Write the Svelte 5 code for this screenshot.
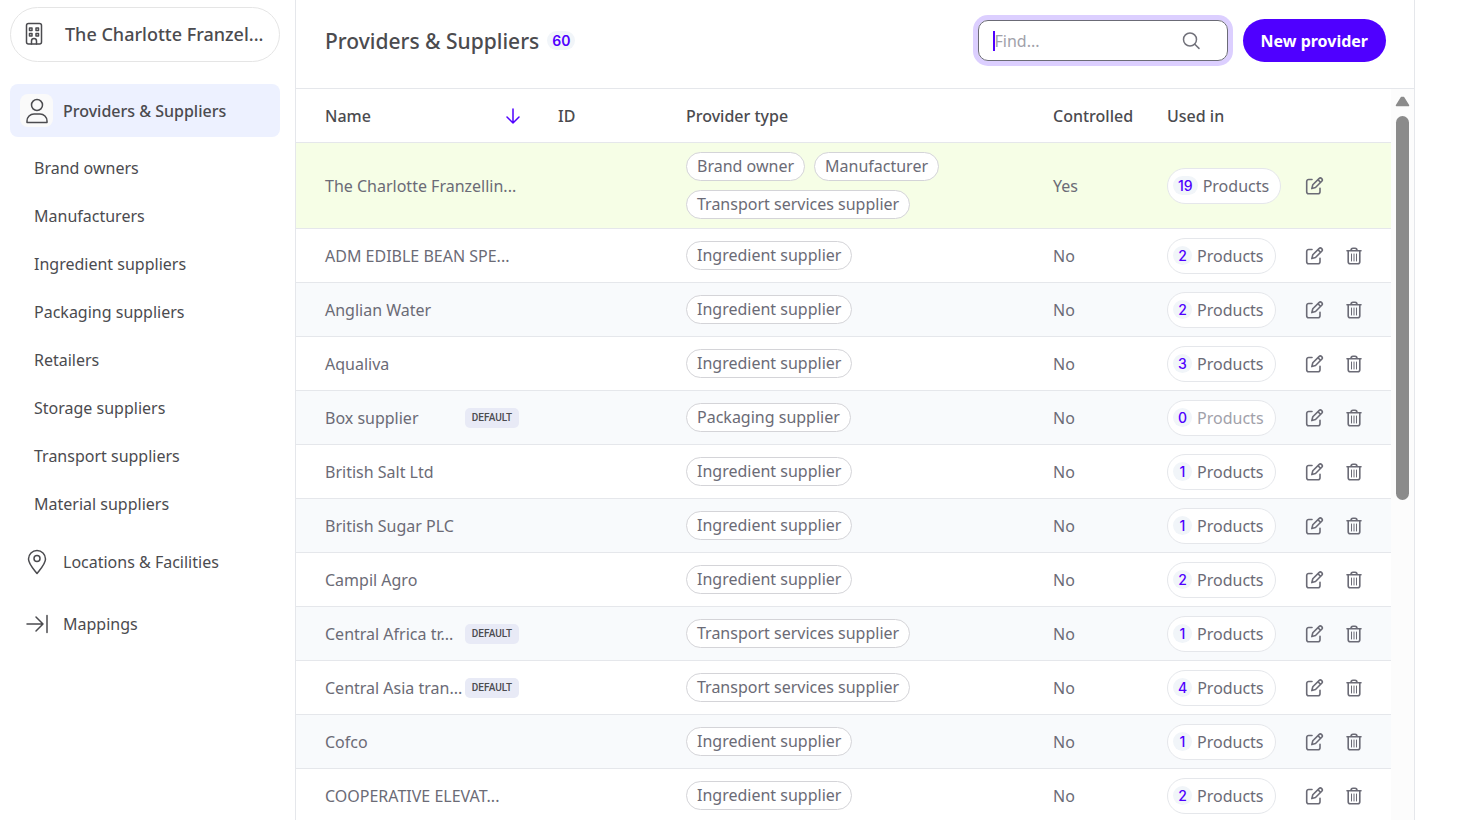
<script lang="ts">
	interface Provider {
		name: string;
		types: string[];
		products: number;
		own?: boolean;
		isDefault?: boolean;
	}

	const subItems = [
		'Brand owners',
		'Manufacturers',
		'Ingredient suppliers',
		'Packaging suppliers',
		'Retailers',
		'Storage suppliers',
		'Transport suppliers',
		'Material suppliers'
	];

	const ingredient = ['Ingredient supplier'];
	const transport = ['Transport services supplier'];

	const providers: Provider[] = [
		{
			name: 'The Charlotte Franzellin...',
			types: ['Brand owner', 'Manufacturer', 'Transport services supplier'],
			products: 19,
			own: true
		},
		{ name: 'ADM EDIBLE BEAN SPE...', types: ingredient, products: 2 },
		{ name: 'Anglian Water', types: ingredient, products: 2 },
		{ name: 'Aqualiva', types: ingredient, products: 3 },
		{ name: 'Box supplier', types: ['Packaging supplier'], products: 0, isDefault: true },
		{ name: 'British Salt Ltd', types: ingredient, products: 1 },
		{ name: 'British Sugar PLC', types: ingredient, products: 1 },
		{ name: 'Campil Agro', types: ingredient, products: 2 },
		{ name: 'Central Africa tr...', types: transport, products: 1, isDefault: true },
		{ name: 'Central Asia tran...', types: transport, products: 4, isDefault: true },
		{ name: 'Cofco', types: ingredient, products: 1 },
		{ name: 'COOPERATIVE ELEVAT...', types: ingredient, products: 2 }
	];

	let search = $state('');
</script>

<div class="app">
	<aside>
		<button class="org">
			<svg width="18" height="24" viewBox="0 0 18 24" aria-hidden="true">
				<rect x="1.5" y="1.5" width="15" height="20.5" rx="2" />
				<path d="M4.5 6h2.5v2.5h-2.5zM11 6h2.5v2.5h-2.5zM4.5 11.5h2.5v2.5h-2.5zM11 11.5h2.5v2.5h-2.5zM6.5 22v-3a2.5 2.5 0 0 1 5 0v3" />
			</svg>
			<span>The Charlotte Franzel...</span>
		</button>

		<nav>
			<a class="item active" href="#providers">
				<span class="icon">
					<svg width="26" height="28" viewBox="0 0 26 28" aria-hidden="true">
						<circle cx="13" cy="8" r="5.5" />
						<path d="M3 25.5v-1.5a7 7 0 0 1 7-7h6a7 7 0 0 1 7 7v1.5z" />
					</svg>
				</span>
				Providers &amp; Suppliers
			</a>
			<div class="sub">
				{#each subItems as label}
					<a href="#sub">{label}</a>
				{/each}
			</div>
			<a class="item" href="#locations">
				<span class="icon">
					<svg width="26" height="28" viewBox="0 0 26 28" aria-hidden="true">
						<path d="M13 25.5C10 21.5 4.5 16 4.5 11a8.5 8.5 0 0 1 17 0c0 5-5.5 10.5-8.5 14.5z" />
						<circle cx="13" cy="10.5" r="3" />
					</svg>
				</span>
				Locations &amp; Facilities
			</a>
			<a class="item" href="#mappings">
				<span class="icon">
					<svg width="26" height="28" viewBox="0 0 26 28" aria-hidden="true">
						<path d="M3 14h16M12 7l7 7-7 7M23 5.5v17" />
					</svg>
				</span>
				Mappings
			</a>
		</nav>
	</aside>

	<main>
		<header>
			<h1>Providers &amp; Suppliers</h1>
			<span class="count">60</span>
			<label class="search">
				<span class="caret"></span>
				<input type="text" placeholder="Find..." aria-label="Find" bind:value={search} />
				<svg width="20" height="20" viewBox="0 0 20 20" aria-hidden="true">
					<circle cx="9" cy="8.5" r="6.5" />
					<path d="M13.8 13.2l4.2 4.2" />
				</svg>
			</label>
			<button class="new">New provider</button>
		</header>

		<div class="content">
			<table>
				<thead>
					<tr>
						<th class="name">
							<div class="name-cell">
								Name
								<svg width="12" height="14" viewBox="0 0 12 14" aria-hidden="true">
									<path d="M6 0v14M0 8l6 6 6-6" />
								</svg>
							</div>
						</th>
						<th class="id">ID</th>
						<th>Provider type</th>
						<th class="controlled">Controlled</th>
						<th class="used">Used in</th>
						<th class="actions"></th>
					</tr>
				</thead>
				<tbody>
					{#each providers as p}
						<tr class:own={p.own}>
							<td class="name">
								<div class="name-cell">
									<span>{p.name}</span>
									{#if p.isDefault}
										<span class="default">DEFAULT</span>
									{/if}
								</div>
							</td>
							<td></td>
							<td>
								<div class="chips">
									{#each p.types as type}
										<span class="chip">{type}</span>
									{/each}
								</div>
							</td>
							<td>{p.own ? 'Yes' : 'No'}</td>
							<td>
								<button class="products" disabled={p.products === 0}>
									<span class="num">{p.products}</span>
									Products
								</button>
							</td>
							<td>
								<div class="tools">
									<button aria-label="Edit {p.name}">
										<svg width="20" height="20" viewBox="0 0 20 20">
											<path d="M8 3.5H4.7a2 2 0 0 0-2 2v10.3a2 2 0 0 0 2 2h9.3a2 2 0 0 0 2-2v-3.5" />
											<path d="M7.8 12.6l1-3.8 6.2-6.2a1.9 1.9 0 0 1 2.7 2.7l-6.2 6.2zM14 3.8l2.6 2.6" />
										</svg>
									</button>
									{#if !p.own}
										<button aria-label="Delete {p.name}">
											<svg width="20" height="20" viewBox="0 0 20 20">
												<path d="M3 4.8h14M4.2 4.8v11a2 2 0 0 0 2 2h7.600a2 2 0 0 0 2-2v-11M7 4.600c0-1.500.8-2.300 2-2.300h2c1.200 0 2 .8 2 2.300" />
												<path class="thin" d="M7.500 8v7M10 8v7M12.500 8v7" />
											</svg>
										</button>
									{/if}
								</div>
							</td>
						</tr>
					{/each}
				</tbody>
			</table>
			<div class="scrollbar">
				<svg width="15" height="11" viewBox="0 0 15 11" aria-hidden="true">
					<path d="M6.5 1.500h2l5 8h-12z" />
				</svg>
				<div class="thumb"></div>
			</div>
		</div>
	</main>
</div>

<style>
	:global(body) {
		background: #fff;
		overflow: hidden;
	}

	.app {
		display: flex;
		height: 100vh;
		padding-right: 44px;
		font: 16px/24px 'Noto Sans', sans-serif;
		color: #4b4b4f;
	}

	button,
	input {
		font: inherit;
		color: inherit;
		border: 0;
		background: none;
		padding: 0;
	}

	svg {
		fill: none;
		stroke: currentColor;
		stroke-width: 1.5;
		stroke-linecap: round;
		stroke-linejoin: round;
		flex-shrink: 0;
	}

	aside {
		width: 270px;
		flex-shrink: 0;
		padding: 7px 15px 0 10px;
		border-right: 1px solid #e5e7eb;
	}

	.org {
		display: flex;
		align-items: center;
		gap: 22px;
		width: 100%;
		height: 55px;
		padding: 0 0 2px 14px;
		border: 1px solid #e5e5e5;
		border-radius: 28px;
		font-size: 18px;
		font-weight: 500;
		white-space: nowrap;
	}

	nav {
		display: flex;
		flex-direction: column;
		margin-top: 22px;
	}

	a {
		color: inherit;
		text-decoration: none;
	}

	.item {
		display: flex;
		align-items: center;
		gap: 10px;
		height: 53px;
		padding-left: 10px;
		margin-bottom: 9px;
		border-radius: 8px;
	}

	.active {
		margin-bottom: 0;
		background: #edf1ff;
		font-weight: 500;
	}

	.icon {
		display: flex;
		align-items: center;
		justify-content: center;
		width: 33px;
		height: 33px;
		border-radius: 8px;
	}

	.active .icon {
		background: #fafafa;
	}

	.sub {
		display: flex;
		flex-direction: column;
		padding: 7px 0 7px 24px;
	}

	.sub a {
		line-height: 48px;
	}

	main {
		flex: 1;
		min-width: 0;
		display: flex;
		flex-direction: column;
		border-right: 1px solid #e5e7eb;
	}

	header {
		display: flex;
		align-items: center;
		height: 81px;
		padding: 0 28px 7px 29px;
		border-bottom: 1px solid #e5e7eb;
	}

	h1 {
		margin: 0;
		font-size: 21px;
		font-weight: 500;
	}

	.count {
		margin-left: 8px;
		padding: 0 5px;
		border-radius: 10px;
		background: #f1f5f9;
		color: #4f00ff;
		font-family: Inter, sans-serif;
		font-size: 14px;
		line-height: 19px;
		font-weight: 600;
	}

	.search {
		box-sizing: border-box;
		display: flex;
		align-items: center;
		width: 250px;
		height: 41px;
		margin-left: auto;
		padding: 0 26px 0 14px;
		border: 1px solid #6b6b76;
		border-radius: 10px;
		box-shadow: 0 0 0 5px #dccfff;
		color: #71717a;
	}

	.caret {
		width: 2px;
		height: 20px;
		background: #4f00ff;
	}

	.search input {
		flex: 1;
		min-width: 0;
		outline: none;
	}

	.search input::placeholder {
		color: #a1a1aa;
	}

	.new {
		height: 43px;
		margin-left: 15px;
		padding: 0 18px;
		border-radius: 22px;
		background: #4f00ff;
		color: #fff;
		font-weight: 700;
	}

	.content {
		flex: 1;
		min-height: 0;
		display: flex;
		align-items: flex-start;
		overflow: hidden;
	}

	table {
		flex: 1;
		min-width: 0;
		table-layout: fixed;
		border-collapse: separate;
		border-spacing: 0;
	}

	th,
	td {
		height: 53px;
		padding: 0 10px;
		border-bottom: 1px solid #e5e7eb;
		text-align: left;
		font-weight: 400;
		white-space: nowrap;
	}

	th {
		font-weight: 500;
	}

	td {
		color: #6b6b76;
	}

	.name {
		width: 194px;
		padding: 0 29px;
	}

	.id {
		width: 108px;
	}

	.controlled {
		width: 94px;
	}

	.used {
		width: 117px;
	}

	.actions {
		width: 77px;
	}

	.name-cell {
		display: flex;
		align-items: center;
		justify-content: space-between;
	}

	.name-cell svg {
		color: #4f00ff;
		overflow: visible;
	}

	tbody tr:nth-child(odd) {
		background: #f8fafc;
	}

	tbody tr.own {
		background: #f6fee6;
	}

	.own td {
		height: 85px;
	}

	.default {
		padding: 0 7px;
		border-radius: 5px;
		background: #e8eaf6;
		color: #4b4b4f;
		font-family: Roboto, sans-serif;
		font-size: 10px;
		line-height: 20px;
		font-weight: 500;
	}

	.chips {
		display: flex;
		flex-wrap: wrap;
		gap: 9px;
	}

	.chip {
		padding: 0 10px;
		border: 1px solid #d4d4d8;
		border-radius: 15px;
		background: #fff;
		line-height: 27px;
	}

	.products {
		display: flex;
		align-items: center;
		gap: 5px;
		height: 36px;
		padding: 0 11px 0 5px;
		border: 1px solid #e5e7eb;
		border-radius: 18px;
		background: #fff;
	}

	.products:disabled {
		color: #a1a1aa;
	}

	.num {
		min-width: 9px;
		padding: 0 5px;
		border-radius: 10px;
		background: #f1f5f9;
		color: #4f00ff;
		font-family: Inter, sans-serif;
		font-size: 14px;
		line-height: 19px;
		font-weight: 500;
		text-align: center;
	}

	.tools {
		display: flex;
		gap: 20px;
	}

	.tools button {
		display: flex;
	}

	.tools path {
		stroke-width: 1.6;
	}

	.tools .thin {
		stroke-width: 1;
	}

	.scrollbar {
		display: flex;
		flex-direction: column;
		align-items: center;
		align-self: stretch;
		gap: 9px;
		width: 23px;
		padding-top: 7px;
		background: #fcfcfc;
	}

	.scrollbar path {
		fill: #8b8b8b;
		stroke: #8b8b8b;
	}

	.thumb {
		width: 13px;
		height: 53%;
		border-radius: 7px;
		background: #8b8b8b;
	}
</style>
